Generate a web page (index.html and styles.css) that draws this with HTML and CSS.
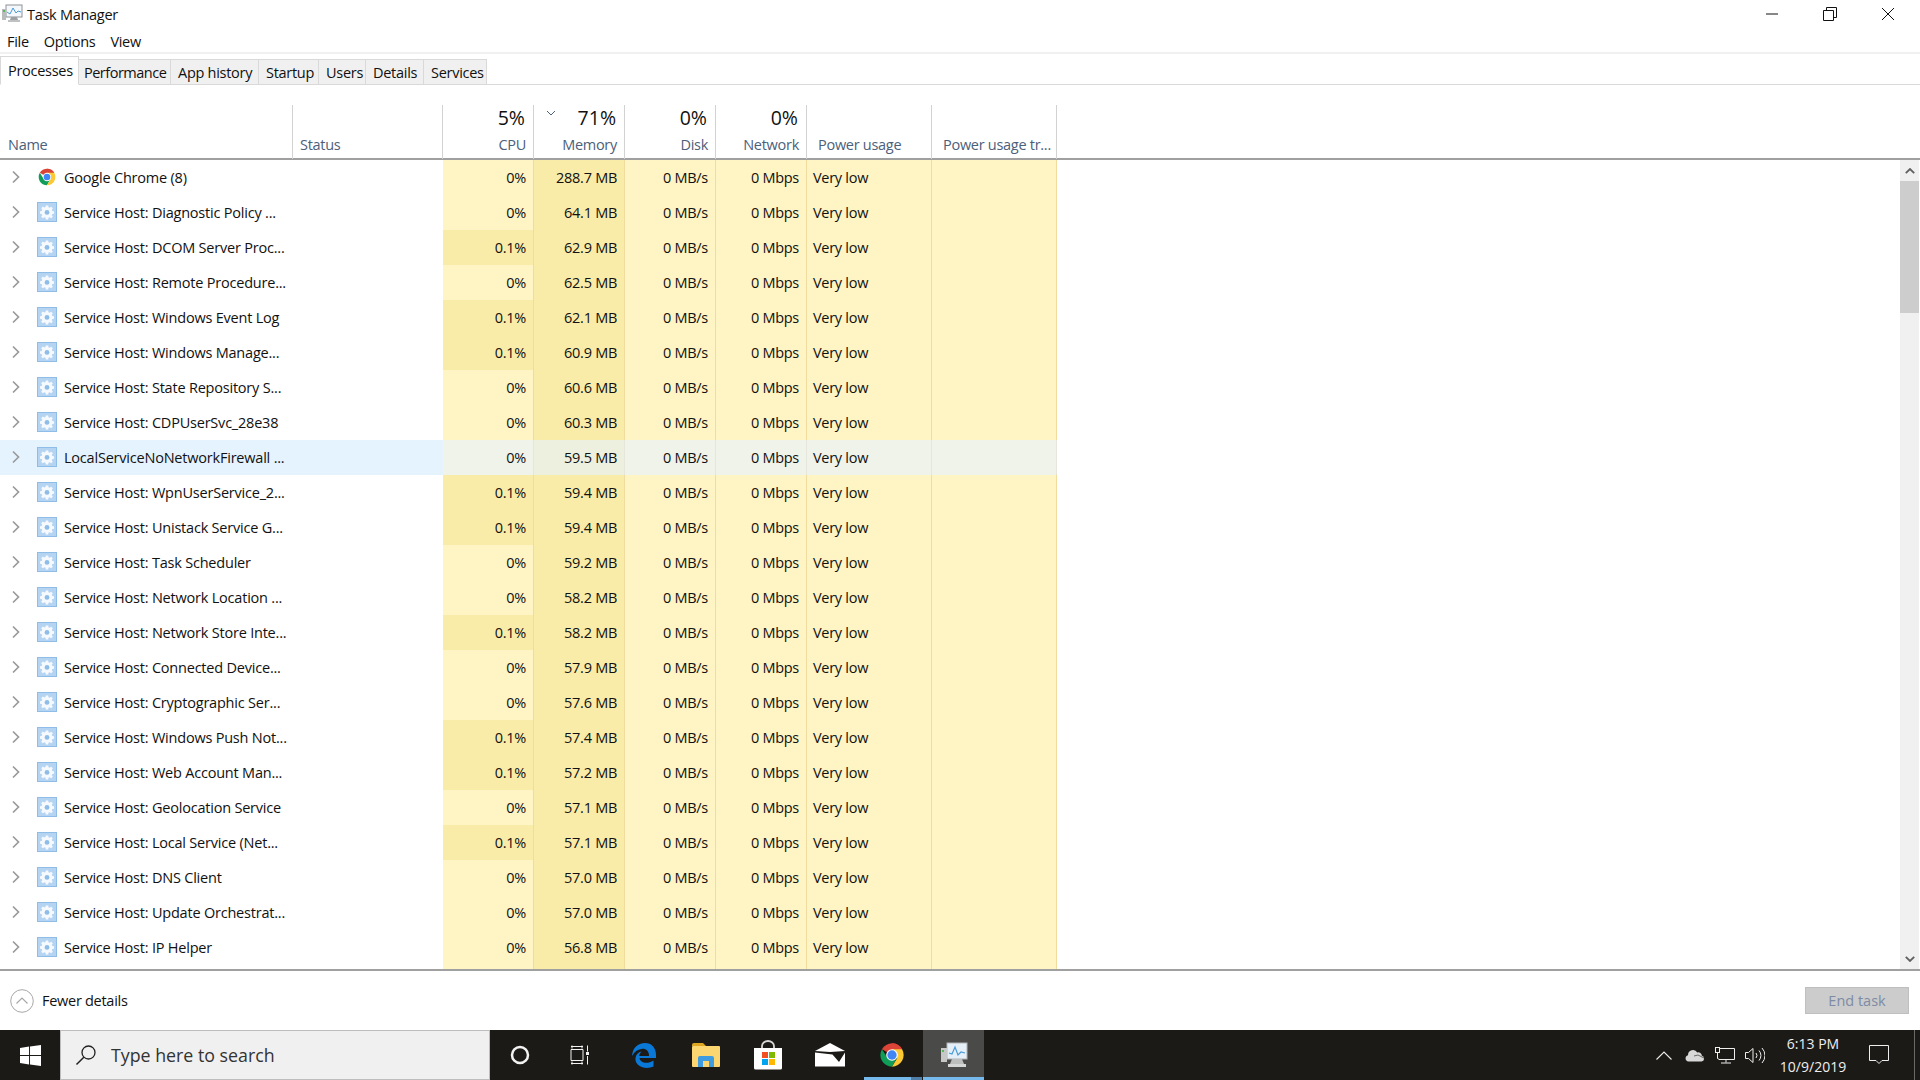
FILE: index.html
```html
<!DOCTYPE html>
<html lang="en">
<head>
<meta charset="utf-8">
<title>Task Manager</title>
<link rel="stylesheet" href="styles.css">
</head>
<body>
<svg class="defs" width="0" height="0" aria-hidden="true">
  <symbol id="chrome" viewBox="0 0 48 48">
    <path d="M24 24 L6.7 14 A20 20 0 0 1 41.3 14 Z" fill="#db4437"/>
    <path d="M24 4 A20 20 0 0 1 41.3 14 L24 14 Z" fill="#db4437"/>
    <path d="M6.7 14 A20 20 0 0 0 24 44 L33 27 L15 27 Z" fill="#0f9d58"/>
    <path d="M41.3 14 A20 20 0 0 1 24 44 L33 29 L24 14 Z" fill="#fcc934"/>
    <circle cx="24" cy="24" r="10" fill="#fff"/>
    <circle cx="24" cy="24" r="8" fill="#4285f4"/>
  </symbol>
  <symbol id="gear" viewBox="0 0 20 20">
    <rect width="20" height="20" fill="#8fbde8"/>
    <rect x="1" y="1" width="18" height="18" fill="#b5d4f2"/>
    <path d="M8.8 3.5h2.4l.3 1.7 1.2.5 1.5-1 1.6 1.6-1 1.5.5 1.2 1.7.3v2.4l-1.7.3-.5 1.2 1 1.5-1.6 1.6-1.5-1-1.2.5-.3 1.7H8.8l-.3-1.7-1.2-.5-1.5 1-1.6-1.6 1-1.5-.5-1.2-1.7-.3V9.200l1.700-.3.500-1.200-1-1.500 1.600-1.600 1.500 1 1.200-.5z" fill="#f6faff"/>
    <circle cx="10" cy="10.400" r="2.400" fill="#8fbde8"/>
  </symbol>
  <symbol id="chev" viewBox="0 0 10 14">
    <path d="M2 1.500 L7.500 7 L2 12.500" fill="none" stroke="#9a9a9a" stroke-width="1.700"/>
  </symbol>
</svg>

<div class="window">
  <header class="titlebar">
    <svg class="app-icon" viewBox="0 0 22 20" width="22" height="20">
      <rect x="5" y="1" width="16" height="12" fill="#f4f8fc" stroke="#8d9296"/>
      <path d="M6 8 L9 10 L12 4 L15 9 L17 7 L20 8" fill="none" stroke="#4a9bd6" stroke-width="1"/>
      <rect x="1" y="5" width="4" height="11" fill="#b9bcbc"/>
      <rect x="2" y="6" width="2" height="2" fill="#58b85c"/>
      <path d="M10 13h6l1 3h-8z" fill="#9da1a3"/>
      <rect x="7" y="16" width="12" height="2" fill="#bfc2c3"/>
    </svg>
    <span class="title">Task Manager</span>
    <div class="winctl">
      <svg viewBox="0 0 14 14" width="14" height="14"><path d="M1 7h12" stroke="#111" stroke-width="1" fill="none"/></svg>
      <svg viewBox="0 0 14 14" width="14" height="14"><path d="M.5 3.500h10v10H.5z M3.500 3.500V.5h10v10h-3" stroke="#111" stroke-width="1" fill="none"/></svg>
      <svg viewBox="0 0 14 14" width="14" height="14"><path d="M1 1L13 13M13 1L1 13" stroke="#111" stroke-width="1" fill="none"/></svg>
    </div>
  </header>

  <nav class="menubar"><span>File</span><span>Options</span><span>View</span></nav>

  <div class="tabs">
    <span class="tab active t1">Processes</span>
    <span class="tab t2">Performance</span>
    <span class="tab t3">App history</span>
    <span class="tab t4">Startup</span>
    <span class="tab t5">Users</span>
    <span class="tab t6">Details</span>
    <span class="tab t7">Services</span>
  </div>

  <main class="content">
    <div class="head grid">
      <div class="hcell left noline"><span class="lbl">Name</span></div>
      <div class="hcell left hstatus"><span class="lbl">Status</span></div>
      <div class="hcell"><span class="pct">5%</span><span class="lbl">CPU</span></div>
      <div class="hcell sorted"><svg class="sort" viewBox="0 0 10 6" width="10" height="6"><path d="M1 1l4 4 4-4" fill="none" stroke="#4c607a" stroke-width="1"/></svg><span class="pct">71%</span><span class="lbl">Memory</span></div>
      <div class="hcell"><span class="pct">0%</span><span class="lbl">Disk</span></div>
      <div class="hcell"><span class="pct">0%</span><span class="lbl">Network</span></div>
      <div class="hcell left pw"><span class="lbl">Power usage</span></div>
      <div class="hcell left pw2"><span class="lbl">Power usage tr...</span></div>
    </div>

    <div class="tablewrap">
      <div class="rows">
        <div class="row grid"><div class="name"><svg class="chev"><use href="#chev"/></svg><svg class="ico"><use href="#chrome"/></svg><span>Google Chrome (8)</span></div><div class="status"></div><div class="c cpu">0%</div><div class="c mem">288.7 MB</div><div class="c">0 MB/s</div><div class="c">0 Mbps</div><div class="c pw">Very low</div><div class="c"></div></div>
        <div class="row grid"><div class="name"><svg class="chev"><use href="#chev"/></svg><svg class="ico"><use href="#gear"/></svg><span>Service Host: Diagnostic Policy ...</span></div><div class="status"></div><div class="c cpu">0%</div><div class="c mem">64.1 MB</div><div class="c">0 MB/s</div><div class="c">0 Mbps</div><div class="c pw">Very low</div><div class="c"></div></div>
        <div class="row grid"><div class="name"><svg class="chev"><use href="#chev"/></svg><svg class="ico"><use href="#gear"/></svg><span>Service Host: DCOM Server Proc...</span></div><div class="status"></div><div class="c cpu hot">0.1%</div><div class="c mem">62.9 MB</div><div class="c">0 MB/s</div><div class="c">0 Mbps</div><div class="c pw">Very low</div><div class="c"></div></div>
        <div class="row grid"><div class="name"><svg class="chev"><use href="#chev"/></svg><svg class="ico"><use href="#gear"/></svg><span>Service Host: Remote Procedure...</span></div><div class="status"></div><div class="c cpu">0%</div><div class="c mem">62.5 MB</div><div class="c">0 MB/s</div><div class="c">0 Mbps</div><div class="c pw">Very low</div><div class="c"></div></div>
        <div class="row grid"><div class="name"><svg class="chev"><use href="#chev"/></svg><svg class="ico"><use href="#gear"/></svg><span>Service Host: Windows Event Log</span></div><div class="status"></div><div class="c cpu hot">0.1%</div><div class="c mem">62.1 MB</div><div class="c">0 MB/s</div><div class="c">0 Mbps</div><div class="c pw">Very low</div><div class="c"></div></div>
        <div class="row grid"><div class="name"><svg class="chev"><use href="#chev"/></svg><svg class="ico"><use href="#gear"/></svg><span>Service Host: Windows Manage...</span></div><div class="status"></div><div class="c cpu hot">0.1%</div><div class="c mem">60.9 MB</div><div class="c">0 MB/s</div><div class="c">0 Mbps</div><div class="c pw">Very low</div><div class="c"></div></div>
        <div class="row grid"><div class="name"><svg class="chev"><use href="#chev"/></svg><svg class="ico"><use href="#gear"/></svg><span>Service Host: State Repository S...</span></div><div class="status"></div><div class="c cpu">0%</div><div class="c mem">60.6 MB</div><div class="c">0 MB/s</div><div class="c">0 Mbps</div><div class="c pw">Very low</div><div class="c"></div></div>
        <div class="row grid"><div class="name"><svg class="chev"><use href="#chev"/></svg><svg class="ico"><use href="#gear"/></svg><span>Service Host: CDPUserSvc_28e38</span></div><div class="status"></div><div class="c cpu">0%</div><div class="c mem">60.3 MB</div><div class="c">0 MB/s</div><div class="c">0 Mbps</div><div class="c pw">Very low</div><div class="c"></div></div>
        <div class="row grid selected"><div class="name"><svg class="chev"><use href="#chev"/></svg><svg class="ico"><use href="#gear"/></svg><span>LocalServiceNoNetworkFirewall ...</span></div><div class="status"></div><div class="c cpu">0%</div><div class="c mem">59.5 MB</div><div class="c">0 MB/s</div><div class="c">0 Mbps</div><div class="c pw">Very low</div><div class="c"></div></div>
        <div class="row grid"><div class="name"><svg class="chev"><use href="#chev"/></svg><svg class="ico"><use href="#gear"/></svg><span>Service Host: WpnUserService_2...</span></div><div class="status"></div><div class="c cpu hot">0.1%</div><div class="c mem">59.4 MB</div><div class="c">0 MB/s</div><div class="c">0 Mbps</div><div class="c pw">Very low</div><div class="c"></div></div>
        <div class="row grid"><div class="name"><svg class="chev"><use href="#chev"/></svg><svg class="ico"><use href="#gear"/></svg><span>Service Host: Unistack Service G...</span></div><div class="status"></div><div class="c cpu hot">0.1%</div><div class="c mem">59.4 MB</div><div class="c">0 MB/s</div><div class="c">0 Mbps</div><div class="c pw">Very low</div><div class="c"></div></div>
        <div class="row grid"><div class="name"><svg class="chev"><use href="#chev"/></svg><svg class="ico"><use href="#gear"/></svg><span>Service Host: Task Scheduler</span></div><div class="status"></div><div class="c cpu">0%</div><div class="c mem">59.2 MB</div><div class="c">0 MB/s</div><div class="c">0 Mbps</div><div class="c pw">Very low</div><div class="c"></div></div>
        <div class="row grid"><div class="name"><svg class="chev"><use href="#chev"/></svg><svg class="ico"><use href="#gear"/></svg><span>Service Host: Network Location ...</span></div><div class="status"></div><div class="c cpu">0%</div><div class="c mem">58.2 MB</div><div class="c">0 MB/s</div><div class="c">0 Mbps</div><div class="c pw">Very low</div><div class="c"></div></div>
        <div class="row grid"><div class="name"><svg class="chev"><use href="#chev"/></svg><svg class="ico"><use href="#gear"/></svg><span>Service Host: Network Store Inte...</span></div><div class="status"></div><div class="c cpu hot">0.1%</div><div class="c mem">58.2 MB</div><div class="c">0 MB/s</div><div class="c">0 Mbps</div><div class="c pw">Very low</div><div class="c"></div></div>
        <div class="row grid"><div class="name"><svg class="chev"><use href="#chev"/></svg><svg class="ico"><use href="#gear"/></svg><span>Service Host: Connected Device...</span></div><div class="status"></div><div class="c cpu">0%</div><div class="c mem">57.9 MB</div><div class="c">0 MB/s</div><div class="c">0 Mbps</div><div class="c pw">Very low</div><div class="c"></div></div>
        <div class="row grid"><div class="name"><svg class="chev"><use href="#chev"/></svg><svg class="ico"><use href="#gear"/></svg><span>Service Host: Cryptographic Ser...</span></div><div class="status"></div><div class="c cpu">0%</div><div class="c mem">57.6 MB</div><div class="c">0 MB/s</div><div class="c">0 Mbps</div><div class="c pw">Very low</div><div class="c"></div></div>
        <div class="row grid"><div class="name"><svg class="chev"><use href="#chev"/></svg><svg class="ico"><use href="#gear"/></svg><span>Service Host: Windows Push Not...</span></div><div class="status"></div><div class="c cpu hot">0.1%</div><div class="c mem">57.4 MB</div><div class="c">0 MB/s</div><div class="c">0 Mbps</div><div class="c pw">Very low</div><div class="c"></div></div>
        <div class="row grid"><div class="name"><svg class="chev"><use href="#chev"/></svg><svg class="ico"><use href="#gear"/></svg><span>Service Host: Web Account Man...</span></div><div class="status"></div><div class="c cpu hot">0.1%</div><div class="c mem">57.2 MB</div><div class="c">0 MB/s</div><div class="c">0 Mbps</div><div class="c pw">Very low</div><div class="c"></div></div>
        <div class="row grid"><div class="name"><svg class="chev"><use href="#chev"/></svg><svg class="ico"><use href="#gear"/></svg><span>Service Host: Geolocation Service</span></div><div class="status"></div><div class="c cpu">0%</div><div class="c mem">57.1 MB</div><div class="c">0 MB/s</div><div class="c">0 Mbps</div><div class="c pw">Very low</div><div class="c"></div></div>
        <div class="row grid"><div class="name"><svg class="chev"><use href="#chev"/></svg><svg class="ico"><use href="#gear"/></svg><span>Service Host: Local Service (Net...</span></div><div class="status"></div><div class="c cpu hot">0.1%</div><div class="c mem">57.1 MB</div><div class="c">0 MB/s</div><div class="c">0 Mbps</div><div class="c pw">Very low</div><div class="c"></div></div>
        <div class="row grid"><div class="name"><svg class="chev"><use href="#chev"/></svg><svg class="ico"><use href="#gear"/></svg><span>Service Host: DNS Client</span></div><div class="status"></div><div class="c cpu">0%</div><div class="c mem">57.0 MB</div><div class="c">0 MB/s</div><div class="c">0 Mbps</div><div class="c pw">Very low</div><div class="c"></div></div>
        <div class="row grid"><div class="name"><svg class="chev"><use href="#chev"/></svg><svg class="ico"><use href="#gear"/></svg><span>Service Host: Update Orchestrat...</span></div><div class="status"></div><div class="c cpu">0%</div><div class="c mem">57.0 MB</div><div class="c">0 MB/s</div><div class="c">0 Mbps</div><div class="c pw">Very low</div><div class="c"></div></div>
        <div class="row grid"><div class="name"><svg class="chev"><use href="#chev"/></svg><svg class="ico"><use href="#gear"/></svg><span>Service Host: IP Helper</span></div><div class="status"></div><div class="c cpu">0%</div><div class="c mem">56.8 MB</div><div class="c">0 MB/s</div><div class="c">0 Mbps</div><div class="c pw">Very low</div><div class="c"></div></div>
        <div class="row grid"><div class="name"></div><div class="status"></div><div class="c cpu"></div><div class="c mem"></div><div class="c"></div><div class="c"></div><div class="c pw"></div><div class="c"></div></div>
      </div>
      <div class="scrollbar">
        <svg class="sbarrow" viewBox="0 0 10 6" width="10" height="6"><path d="M.8 5.200L5 1l4.200 4.200" fill="none" stroke="#606060" stroke-width="1.800"/></svg>
        <div class="thumb"></div>
        <div class="sbspace"></div>
        <svg class="sbarrow" viewBox="0 0 10 6" width="10" height="6"><path d="M.8.800L5 5l4.200-4.200" fill="none" stroke="#606060" stroke-width="1.800"/></svg>
      </div>
    </div>
  </main>

  <footer class="footer">
    <div class="fewer">
      <svg viewBox="0 0 24 24" width="24" height="24"><circle cx="12" cy="12" r="11.300" fill="none" stroke="#a8a8a8" stroke-width="1"/><path d="M6.500 14.500L12 9l5.500 5.500" fill="none" stroke="#a8a8a8" stroke-width="1.200"/></svg>
      <span>Fewer details</span>
    </div>
    <button class="endtask">End task</button>
  </footer>
</div>

<div class="taskbar">
  <div class="start">
    <svg viewBox="0 0 22 22" width="21" height="21"><path d="M0 3.100L9.500 1.700V10.500H0zM10.500 1.500L22 0V10.500H10.500zM0 11.500H9.500V20.300L0 18.900zM10.500 11.500H22V22L10.500 20.500z" fill="#fff"/></svg>
  </div>
  <div class="search">
    <svg viewBox="0 0 22 22" width="22" height="22"><circle cx="13.500" cy="8.500" r="6.500" fill="none" stroke="#222" stroke-width="1.300"/><path d="M8.800 13.200L1.500 20.500" stroke="#222" stroke-width="1.500" fill="none"/></svg>
    <span>Type here to search</span>
  </div>
  <div class="tb-btn b-cortana"><svg viewBox="0 0 20 20" width="20" height="20"><circle cx="10" cy="10" r="8" fill="none" stroke="#f2f2f2" stroke-width="2.500"/></svg></div>
  <div class="tb-btn b-view"><svg viewBox="0 0 20 20" width="20" height="20"><path d="M1 1.500h12M1 18.500h12M1 4.500h12v11H1z M2 .5v3M12 .5v3M2 16.500v3M12 16.500v3M17.500 .5v6M17.500 11v8.500" stroke="#f2f2f2" stroke-width="1" fill="none"/><rect x="16" y="7" width="3" height="3" fill="#f2f2f2"/></svg></div>
  <div class="tb-btn b-edge"><svg viewBox="0 0 26 26" width="26" height="26"><path d="M1 14C1.500 6 7 1 14 1c6.500 0 11 4.500 11 12v3H8.500c.5 5 8 6.500 14 2.500v6C15 28 3.500 25 4.500 16c.4-3.500 3-5.800 6-6.500-1.500 1.500-2.200 3-2.300 4.500h9.800c.3-4.500-2.800-7.500-6.500-7.300C7 7 3.500 9.500 1 14z" fill="#0a78d7"/></svg></div>
  <div class="tb-btn b-files"><svg viewBox="0 0 28 26" width="28" height="26"><path d="M0 3a2 2 0 012-2h9l3 3H0z" fill="#dfa621"/><rect y="4" width="28" height="21" rx="1" fill="#fbd671"/><path d="M6 25V16a2 2 0 012-2h12a2 2 0 012 2v9h-5v-6h-6v6z" fill="#3f9ce0"/></svg></div>
  <div class="tb-btn b-store"><svg viewBox="0 0 30 30" width="30" height="30"><path d="M9 10V6a6 5 0 0112 0v4" fill="none" stroke="#d8d8d8" stroke-width="1.800"/><path d="M1 8h28v20a1.500 1.500 0 01-1.500 1.500h-25A1.500 1.500 0 011 28z" fill="#fff"/><rect x="9" y="12" width="6" height="6" fill="#f25022"/><rect x="16" y="12" width="6" height="6" fill="#7fba00"/><rect x="9" y="19" width="6" height="6" fill="#00a4ef"/><rect x="16" y="19" width="6" height="6" fill="#ffb900"/></svg></div>
  <div class="tb-btn b-mail"><svg viewBox="0 0 30 24" width="30" height="24"><path d="M0 8L15 0l15 8-15 1z" fill="#fff"/><path d="M0 9.500l17.500 2L24 19 30 9.500V23.500H0z" fill="#fff"/></svg></div>
  <div class="tb-btn b-chrome on"><svg width="28" height="28"><use href="#chrome"/></svg></div>
  <div class="tb-btn b-tm on active">
    <svg viewBox="0 0 30 28" width="30" height="28"><rect x="8" y="2" width="20" height="16" fill="#e4eff8" stroke="#b2b5b7"/><path d="M10 12l3 1 3-7 3 8 3-3 4 1" fill="none" stroke="#4a9bd6" stroke-width="1.200"/><rect x="2" y="7" width="6" height="14" fill="#c6c8c8"/><rect x="3" y="9" width="2" height="2" fill="#58b85c"/><path d="M13 18h10l2 5H11z" fill="#bdbfbf"/><rect x="9" y="23" width="18" height="3" fill="#d5d6d6"/></svg>
  </div>
  <div class="tray">
    <svg class="t-up" viewBox="0 0 16 9" width="16" height="9"><path d="M.5 8.500L8 1l7.500 7.500" fill="none" stroke="#eee" stroke-width="1.100"/></svg>
    <svg class="t-cloud" viewBox="0 0 20 13" width="20" height="13"><path d="M3.500 12.500a3.200 3.200 0 01-.5-6.300 5 5 0 019.300-2.700 3.600 3.600 0 014.600 3.300 2.900 2.900 0 01-.4 5.700z" fill="#d8d8d8"/><path d="M9 7l4-1 6 3" fill="none" stroke="#1c1a17" stroke-width=".6"/></svg>
    <svg class="t-net" viewBox="0 0 20 17" width="20" height="17"><path d="M3.500 1.500H19.500V12.500H3.500M11 12.500v3M6 16h10" fill="none" stroke="#eee" stroke-width="1"/><rect x=".5" y=".5" width="4" height="5" fill="#1c1a17" stroke="#eee"/><path d="M2.500 5.500v6h1" fill="none" stroke="#eee"/></svg>
    <svg class="t-vol" viewBox="0 0 20 17" width="20" height="17"><path d="M.5 5.500h3L8 1.500v14l-4.500-4h-3z" fill="none" stroke="#eee"/><path d="M11 6a4 4 0 010 5M14 3.500a7.500 7.500 0 010 10M17 1a11 11 0 010 15" fill="none" stroke="#eee"/></svg>
    <div class="clock"><span>6:13 PM</span><span>10/9/2019</span></div>
    <svg class="t-note" viewBox="0 0 20 20" width="20" height="20"><path d="M.5.5h19v15h-6.500l-3 3-3-3H.5z" fill="none" stroke="#eee"/></svg>
    <div class="peek"></div>
  </div>
</div>
</body>
</html>
```

FILE: styles.css
```css
* { box-sizing: border-box; }
html, body { margin: 0; padding: 0; width: 1920px; height: 1080px; overflow: hidden; background: #fff; }
body { font-family: "Open Sans", "Noto Sans", sans-serif; font-size: 14.500px; letter-spacing: -0.28px; color: #111; display: flex; flex-direction: column; }
.defs { position: absolute; }
svg { display: block; flex: none; }

.window { height: 1030px; display: flex; flex-direction: column; }

.titlebar { height: 30px; display: flex; align-items: center; padding: 0 0 2px 1px; flex: none; }
.app-icon { margin-right: 4px; }
.winctl { margin-left: auto; display: flex; gap: 44px; padding-right: 25px; align-items: center; }

.menubar { height: 22px; display: flex; align-items: center; padding-left: 7px; gap: 15px; flex: none; }

.tabs { height: 33px; flex: none; border-top: 2px solid #f0f0f0; display: flex; align-items: flex-end; border-bottom: 1px solid #d9d9d9; }
.tab { height: 26px; margin-bottom: -1px; background: #f0f0f0; border: 1px solid #d9d9d9; border-left: 0; display: flex; align-items: center; padding-left: 7px; white-space: nowrap; }
.tab.active { height: 29px; background: #fff; border-bottom-color: #fff; padding: 0 0 1px 7px; border-left: 1px solid #d9d9d9; }
.t1 { width: 79px; } .t2 { width: 92px; padding-left: 5px; letter-spacing: -0.5px; } .t3 { width: 88px; } .t4 { width: 60px; }
.t5 { width: 47px; } .t6 { width: 58px; } .t7 { width: 63px; }

.content { flex: 1; display: flex; flex-direction: column; min-height: 0; }
.grid { display: grid; grid-template-columns: 293px 150px 91px 91px 91px 91px 125px 125px; }

.head { height: 75px; padding-top: 20px; border-bottom: 2px solid #a0a0a0; flex: none; }
.hcell { position: relative; display: flex; flex-direction: column; justify-content: flex-end; align-items: flex-end; border-right: 1px solid #d2d2d2; padding: 0 7px 4px 0; height: 54px; }
.hcell.left { align-items: flex-start; padding: 0 0 4px 8px; }
.hcell.hstatus { padding-left: 7px; }
.hcell.pw, .hcell.pw2 { padding-left: 11px; }
.lbl { color: #4c607a; line-height: 20px; white-space: nowrap; }
.pct { font-size: 19.500px; letter-spacing: 0; line-height: 26px; color: #111; margin: 0 1px 4px 0; }
.sort { position: absolute; left: 12px; top: 5px; }

.tablewrap { flex: 1; min-height: 0; display: flex; border-bottom: 2px solid #a0a0a0; }
.rows { flex: 1; min-width: 0; overflow: hidden; }
.row { height: 35px; }
.name { display: flex; align-items: center; padding: 0 0 1px 11px; white-space: nowrap; letter-spacing: -0.21px; }
.chev { width: 10px; height: 14px; margin-right: 16px; }
.ico { width: 20px; height: 20px; margin-right: 7px; }
.c { background: #fff4c4; border-right: 1px solid #f0dc9e; text-align: right; padding-right: 7px; line-height: 35px; white-space: nowrap; }
.c.mem, .c.hot { background: #f9eca8; }
.c.pw { text-align: left; padding-left: 6px; }
.selected .name, .selected .status { background: #e5f3ff; }
.selected .c { background: #f0f3ea; border-right-color: #e6e6dc; }
.selected .c.mem { background: #edf0de; }

.scrollbar { width: 19px; margin-right: 1px; flex: none; background: #f0f0f0; display: flex; flex-direction: column; align-items: center; }
.sbarrow { margin: 8px 0 7px; }
.thumb { width: 100%; height: 132px; background: #cdcdcd; }
.sbspace { flex: 1; }

.footer { height: 59px; flex: none; display: flex; align-items: center; justify-content: space-between; padding: 0 11px 0 10px; }
.fewer { display: flex; align-items: center; gap: 8px; }
.endtask { width: 104px; height: 27px; background: #cccccc; border: 1px solid #bfbfbf; color: #7d8ba5; font-family: inherit; font-size: 14.500px; padding: 0; }

.taskbar { height: 50px; flex: none; background: #1c1a17; display: flex; align-items: center; position: relative; letter-spacing: 0; }
.start { width: 60px; height: 50px; display: flex; align-items: center; justify-content: center; }
.search { width: 430px; height: 50px; background: #f0f0f0; border: 1px solid #bdbdbd; display: flex; align-items: center; padding-left: 14px; font-size: 17.800px; color: #333; gap: 14px; }
.tb-btn { height: 50px; display: flex; align-items: center; justify-content: center; flex: none; position: relative; }
.b-cortana { width: 61px; margin-left: -1px; }
.b-view { width: 61px; margin-left: -1px; }
.b-edge { width: 61px; margin-left: 3px; }
.b-files { width: 62px; margin-left: 1px; }
.b-store { width: 61px; }
.b-mail { width: 63px; }
.b-chrome { width: 60px; margin-left: 1px; }
.b-tm { width: 61px; margin-left: 1px; }
.on::after { content: ""; position: absolute; left: 2px; right: 11px; bottom: 0; height: 3px; background: #76b9ed; }
.b-chrome::before { content: ""; position: absolute; right: 0; width: 11px; bottom: 0; height: 3px; background: #4f7fa6; }
.b-tm.active { background: #4a4a48; }
.b-tm.on::after { left: 0; right: 0; }
.tray { margin-left: auto; height: 50px; display: flex; align-items: center; color: #eee; }
.t-up { margin-right: 13px; }
.t-cloud { margin-right: 10px; }
.t-net { margin-right: 10px; }
.clock { width: 96px; margin-right: 8px; display: flex; flex-direction: column; align-items: center; font-size: 14px; line-height: 23px; }
.t-note { margin: 0 25px 0 0; }
.peek { width: 1px; height: 50px; background: #6a6a6a; margin-right: 5px; }
```
